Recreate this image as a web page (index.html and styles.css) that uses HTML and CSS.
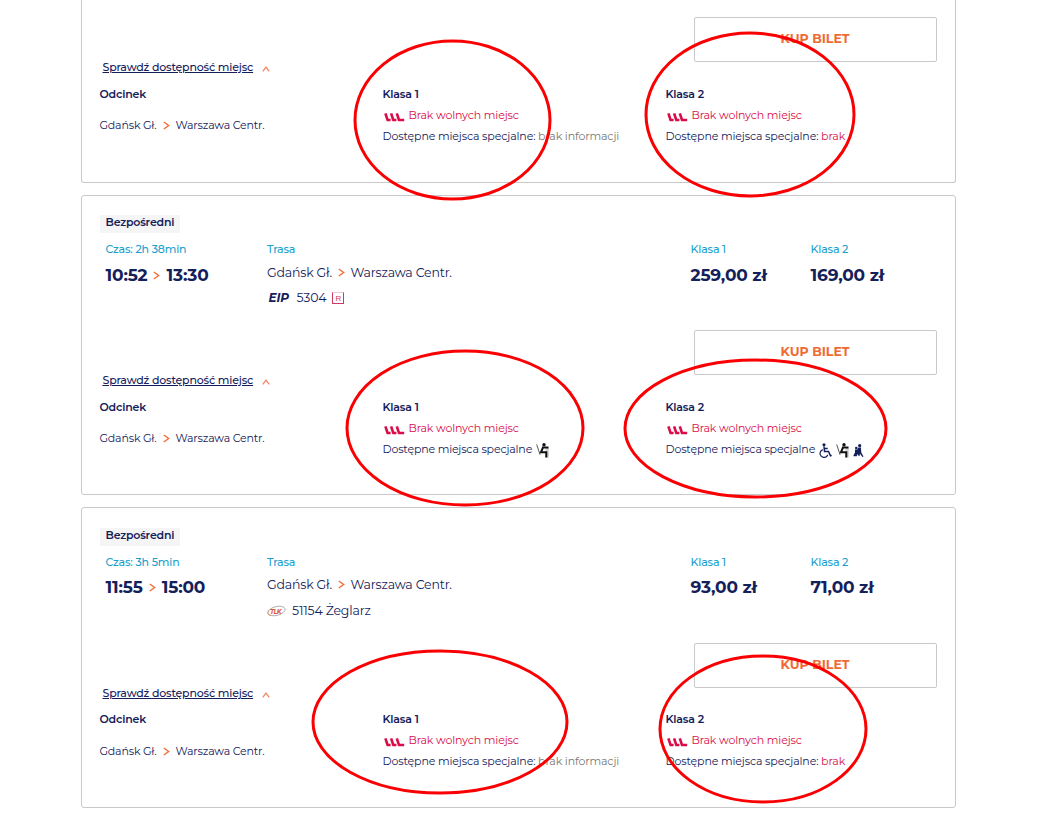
FILE: index.html
```
<!DOCTYPE html>
<html lang="pl">
<head>
    <meta charset="UTF-8">
    <meta name="viewport" content="width=device-width, initial-scale=1.0">
    <title>Wyniki wyszukiwania</title>
    <link rel="stylesheet" href="styles.css">
</head>
<body>
    <svg class="defs" width="0" height="0">
        <symbol id="chevron" viewBox="0 0 7 9"><path d="M.8 1l4.8 3.5L.8 8" fill="none" stroke="#f2703a" stroke-width="1.5"/></symbol>
        <symbol id="up" viewBox="0 0 8 6"><path d="M.8 5.4L4 1.2l3.2 4.2" fill="none" stroke="#f28a68" stroke-width="1.4"/></symbol>
        <symbol id="seats" viewBox="0 0 21 10">
            <path d="M1.4 1.4l2.2 6.6H6.6M7.1 1.4l2.2 6.6h3.1M12.8 1.4l2.2 6.6h5.2" fill="none" stroke="#d90d49" stroke-width="2.6" stroke-linejoin="round"/>
        </symbol>
        <symbol id="wheelchair" viewBox="0 0 13 15">
            <circle cx="5" cy="1.8" r="1.6" fill="#14205a"/>
            <path d="M5 3.5l.5 5h4l2 4.3 1.2-.4M5.3 5.6h3.4" fill="none" stroke="#14205a" stroke-width="1.5"/>
            <path d="M3.8 6.6a4 4 0 1 0 5 5.2" fill="none" stroke="#14205a" stroke-width="1.2"/>
        </symbol>
        <symbol id="seated" viewBox="0 0 13 15">
            <path d="M9.5 5h3.3v9.5H9.5z" fill="#cfcfcf"/>
            <path d="M.7 1.5l3.4 10.3" stroke="#444" stroke-width=".9"/>
            <circle cx="8" cy="1.8" r="1.7" fill="#111"/>
            <path d="M7.2 4L5 9.2h5.3v5.3M6.5 4.6h6" fill="none" stroke="#111" stroke-width="2"/>
        </symbol>
        <symbol id="child" viewBox="0 0 11 15">
            <circle cx="6.7" cy="2.7" r="1.6" fill="#14205a"/>
            <circle cx="3.3" cy="5" r="1.3" fill="#14205a"/>
            <path d="M5.5 4.4h2.4l.4 5 2.2 4.2-1.1.5-2.4-3.4L6.5 13H5.6L4.8 11 3.6 13.3H.5v-1L2 9.5V6.4h2.2z" fill="#14205a"/>
        </symbol>
    </svg>

    <div class="results">
        <div class="card first">
            <div class="actions">
                <a class="toggle"><span>Sprawdź dostępność miejsc</span><svg width="8" height="6"><use href="#up"/></svg></a>
                <button class="buy">KUP BILET</button>
            </div>
            <div class="seats">
                <div>
                    <p class="head">Odcinek</p>
                    <p class="section"><span class="from">Gdańsk Gł.</span><svg width="7" height="9"><use href="#chevron"/></svg><span>Warszawa Centr.</span></p>
                </div>
                <div>
                    <p class="head">Klasa 1</p>
                    <p class="none"><svg width="21" height="10"><use href="#seats"/></svg>Brak wolnych miejsc</p>
                    <p class="special">Dostępne miejsca specjalne: <span class="unknown">brak informacji</span></p>
                </div>
                <div>
                    <p class="head">Klasa 2</p>
                    <p class="none"><svg width="21" height="10"><use href="#seats"/></svg>Brak wolnych miejsc</p>
                    <p class="special">Dostępne miejsca specjalne: <span class="lack">brak</span></p>
                </div>
            </div>
        </div>

        <div class="card">
            <div class="badge">Bezpośredni</div>
            <div class="trip">
                <div class="time">
                    <p class="label">Czas: 2h 38min</p>
                    <p class="hours"><span>10:52</span><svg width="7" height="9"><use href="#chevron"/></svg><span>13:30</span></p>
                </div>
                <div class="route">
                    <p class="label">Trasa</p>
                    <p class="stations"><span class="from">Gdańsk Gł.</span><svg width="7" height="9"><use href="#chevron"/></svg><span>Warszawa Centr.</span></p>
                    <p class="train"><span class="eip">EIP</span><span>5304</span><span class="reservation">R</span></p>
                </div>
                <div class="price">
                    <p class="label">Klasa 1</p>
                    <p class="amount">259,00 zł</p>
                </div>
                <div class="price">
                    <p class="label">Klasa 2</p>
                    <p class="amount">169,00 zł</p>
                </div>
            </div>
            <div class="actions">
                <a class="toggle"><span>Sprawdź dostępność miejsc</span><svg width="8" height="6"><use href="#up"/></svg></a>
                <button class="buy">KUP BILET</button>
            </div>
            <div class="seats">
                <div>
                    <p class="head">Odcinek</p>
                    <p class="section"><span class="from">Gdańsk Gł.</span><svg width="7" height="9"><use href="#chevron"/></svg><span>Warszawa Centr.</span></p>
                </div>
                <div>
                    <p class="head">Klasa 1</p>
                    <p class="none"><svg width="21" height="10"><use href="#seats"/></svg>Brak wolnych miejsc</p>
                    <p class="special icons"><span>Dostępne miejsca specjalne</span><svg width="13" height="15"><use href="#seated"/></svg></p>
                </div>
                <div>
                    <p class="head">Klasa 2</p>
                    <p class="none"><svg width="21" height="10"><use href="#seats"/></svg>Brak wolnych miejsc</p>
                    <p class="special icons"><span>Dostępne miejsca specjalne</span><svg width="13" height="15"><use href="#wheelchair"/></svg><svg width="13" height="15"><use href="#seated"/></svg><svg width="11" height="15"><use href="#child"/></svg></p>
                </div>
            </div>
        </div>

        <div class="card last">
            <div class="badge">Bezpośredni</div>
            <div class="trip">
                <div class="time">
                    <p class="label">Czas: 3h 5min</p>
                    <p class="hours"><span>11:55</span><svg width="7" height="9"><use href="#chevron"/></svg><span>15:00</span></p>
                </div>
                <div class="route">
                    <p class="label">Trasa</p>
                    <p class="stations"><span class="from">Gdańsk Gł.</span><svg width="7" height="9"><use href="#chevron"/></svg><span>Warszawa Centr.</span></p>
                    <p class="train"><svg class="tlk" width="19" height="12" viewBox="0 0 19 12"><ellipse cx="9.5" cy="6" rx="8.8" ry="4.4" transform="rotate(-14 9.5 6)" fill="none" stroke="#aaa" stroke-width=".9"/><path d="M2 5.5C0 8 .5 10 4 10.5" fill="none" stroke="#ee8a60" stroke-width=".9"/><text x="3" y="8.6" textLength="11.5">TLK</text></svg><span>51154 Żeglarz</span></p>
                </div>
                <div class="price">
                    <p class="label">Klasa 1</p>
                    <p class="amount">93,00 zł</p>
                </div>
                <div class="price">
                    <p class="label">Klasa 2</p>
                    <p class="amount">71,00 zł</p>
                </div>
            </div>
            <div class="actions">
                <a class="toggle"><span>Sprawdź dostępność miejsc</span><svg width="8" height="6"><use href="#up"/></svg></a>
                <button class="buy">KUP BILET</button>
            </div>
            <div class="seats">
                <div>
                    <p class="head">Odcinek</p>
                    <p class="section"><span class="from">Gdańsk Gł.</span><svg width="7" height="9"><use href="#chevron"/></svg><span>Warszawa Centr.</span></p>
                </div>
                <div>
                    <p class="head">Klasa 1</p>
                    <p class="none"><svg width="21" height="10"><use href="#seats"/></svg>Brak wolnych miejsc</p>
                    <p class="special">Dostępne miejsca specjalne: <span class="unknown">brak informacji</span></p>
                </div>
                <div>
                    <p class="head">Klasa 2</p>
                    <p class="none"><svg width="21" height="10"><use href="#seats"/></svg>Brak wolnych miejsc</p>
                    <p class="special">Dostępne miejsca specjalne: <span class="lack">brak</span></p>
                </div>
            </div>
        </div>
    </div>

    <!-- red marks over the seat information -->
    <svg class="marks" width="1057" height="820">
        <ellipse cx="452.5" cy="120" rx="97.5" ry="79"/>
        <ellipse cx="750" cy="114.5" rx="104" ry="81.5"/>
        <ellipse cx="465" cy="428" rx="118" ry="77"/>
        <ellipse cx="755.5" cy="428.5" rx="130.5" ry="68.5"/>
        <ellipse cx="440" cy="722" rx="127" ry="71"/>
        <ellipse cx="763" cy="729" rx="103" ry="73"/>
    </svg>
</body>
</html>
```
FILE: styles.css
```
body {
    margin: 0;
    height: 820px;
    overflow: hidden;
    position: relative;
    background-color: #fff;
    color: #14205a;
    font-family: 'Montserrat', 'Inter', sans-serif;
    font-size: 11px;
    line-height: 21px;
    letter-spacing: -0.17px;
}
p {
    margin: 0;
}
svg {
    flex: none;
}
.defs {
    position: absolute;
}
.results {
    width: 875px;
    margin-left: 81px;
    display: flex;
    flex-direction: column;
    gap: 12px;
}
.card {
    box-sizing: border-box;
    height: 300.4px;
    padding: 19px 18px 0;
    border: 1px solid #c9c9cb;
    border-radius: 3px;
}
.card.first {
    height: 183px;
    padding-top: 17px;
    border-top: none;
    border-radius: 0 0 3px 3px;
}
.card.last {
    padding-top: 20px;
}
.badge {
    width: 80px;
    height: 18px;
    box-sizing: border-box;
    padding-left: 5.5px;
    background-color: #f5f5f6;
    line-height: 15px;
    font-weight: 600;
    letter-spacing: -0.2px;
}
.trip {
    display: grid;
    grid-template-columns: 161.5px 423.5px 120px 1fr;
    box-sizing: border-box;
    height: 97px;
    padding: 6px 0 0 5.5px;
}
.label {
    color: #1c9fcd;
    font-weight: 500;
}
.hours, .amount {
    margin-top: 5px;
    font-size: 17px;
    font-weight: 700;
    letter-spacing: -0.15px;
}
.last .hours, .last .amount {
    margin-top: 4px;
}
.hours {
    display: flex;
    align-items: center;
    gap: 6px;
}
.stations {
    display: flex;
    align-items: center;
    margin-top: 2px;
    font-size: 12.5px;
}
.stations .from {
    width: 70.5px;
}
.stations svg, .section svg {
    margin-right: 6px;
}
.last .stations {
    margin-top: 1px;
}
.train {
    display: flex;
    align-items: center;
    gap: 6px;
    margin-top: 4px;
    font-size: 12.5px;
}
.last .train {
    margin-top: 5px;
}
.eip {
    width: 23.5px;
    padding-left: 1.5px;
    box-sizing: border-box;
    font-weight: 700;
    font-style: italic;
    font-size: 12px;
}
.tlk text {
    fill: #d4583a;
    font-size: 6.5px;
    font-weight: 700;
    font-style: italic;
}
.reservation {
    width: 12px;
    height: 12px;
    box-sizing: border-box;
    border: 1px solid #cf3764;
    border-top-color: #f3c8d4;
    color: #cf3764;
    font-family: 'Liberation Sans', sans-serif;
    font-size: 8px;
    line-height: 11px;
    letter-spacing: 0;
    text-align: center;
}
.actions {
    display: flex;
    justify-content: space-between;
    height: 58px;
}
.toggle {
    display: flex;
    align-items: center;
    align-self: flex-end;
    gap: 9px;
    padding-left: 2.5px;
    line-height: 16px;
    font-weight: 500;
}
.toggle span {
    text-decoration: underline;
}
.toggle svg {
    margin-top: 4px;
}
.buy {
    width: 243px;
    height: 45px;
    padding: 0 1px 2px 0;
    border: 1px solid #c9c9cb;
    border-radius: 2px;
    background: none;
    color: #ee6b33;
    font-family: inherit;
    font-size: 12.5px;
    font-weight: 700;
}
.seats {
    display: grid;
    grid-template-columns: 283px 283px 1fr;
    margin-left: -0.5px;
    padding-top: 9px;
}
.last .seats {
    padding-top: 8px;
}
.head {
    font-weight: 600;
}
.section {
    display: flex;
    align-items: center;
    margin-top: 10px;
}
.last .section {
    margin-top: 11px;
}
.section .from {
    width: 63px;
}
.none {
    display: flex;
    align-items: center;
    gap: 4px;
    padding-left: 1px;
    color: #d90d49;
    letter-spacing: -0.13px;
}
.none svg {
    margin-top: 3px;
}
.special {
    white-space: nowrap;
    letter-spacing: -0.13px;
}
.icons {
    display: flex;
    align-items: center;
    gap: 4px;
    letter-spacing: -0.17px;
}
.icons svg {
    margin-top: 2px;
}
.unknown {
    color: #777;
}
.lack {
    color: #d90d49;
}
.marks {
    position: absolute;
    top: 0;
    left: 0;
    pointer-events: none;
}
.marks ellipse {
    fill: none;
    stroke: #fa0002;
    stroke-width: 3;
}
```
